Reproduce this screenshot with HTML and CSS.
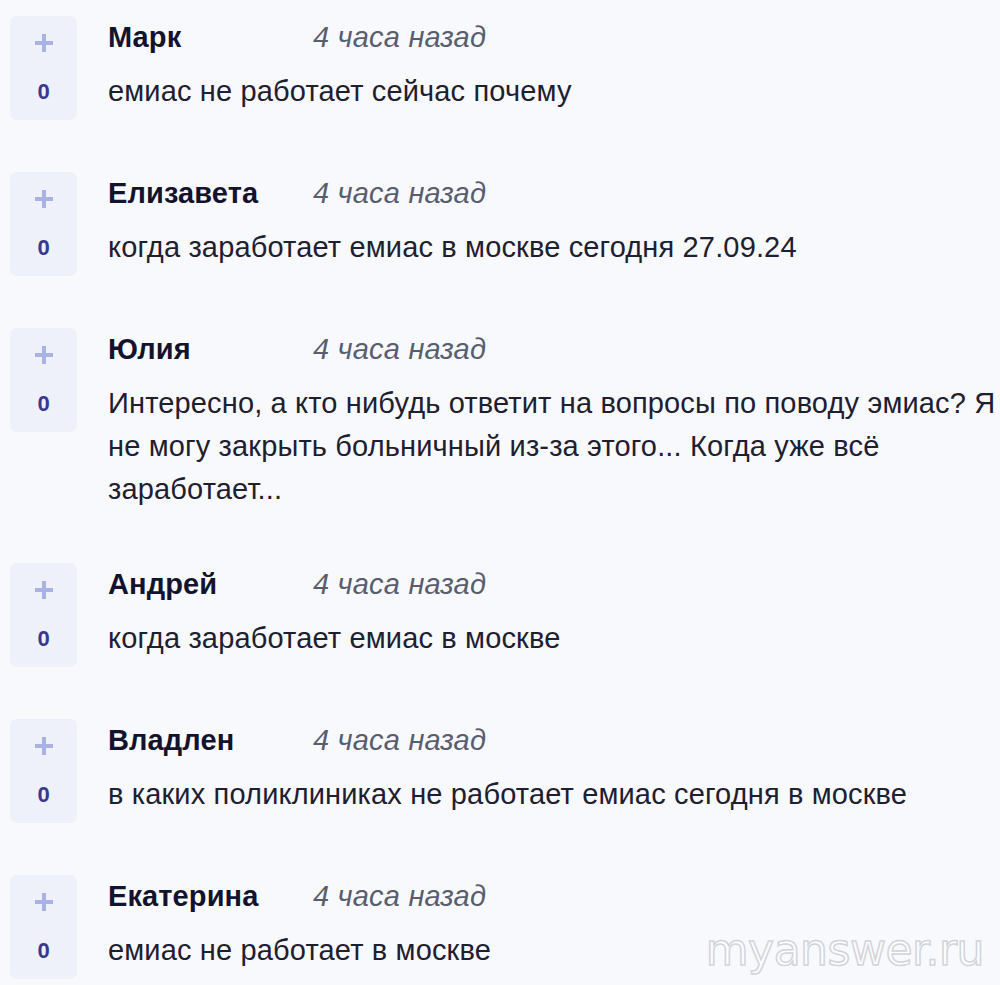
FILE: index.html
```html
<!DOCTYPE html>
<html lang="ru">
<head>
    <meta charset="UTF-8">
    <meta name="viewport" content="width=device-width, initial-scale=1.0">
    <title>Комментарии</title>
    <link rel="stylesheet" href="styles.css">
</head>
<body>

<div class="comments">
    <div class="comment">
        <div class="vote">
            <svg class="vote-plus" width="22" height="22" viewBox="0 0 22 22"><path d="M11 2v18M2 11h18" stroke="#a9b2e2" stroke-width="4"/></svg>
            <span class="vote-count">0</span>
        </div>
        <div class="comment-body">
            <div class="comment-head">
                <span class="author">Марк</span>
                <span class="time">4 часа назад</span>
            </div>
            <p class="text">емиас не работает сейчас почему</p>
        </div>
    </div>

    <div class="comment">
        <div class="vote">
            <svg class="vote-plus" width="22" height="22" viewBox="0 0 22 22"><path d="M11 2v18M2 11h18" stroke="#a9b2e2" stroke-width="4"/></svg>
            <span class="vote-count">0</span>
        </div>
        <div class="comment-body">
            <div class="comment-head">
                <span class="author">Елизавета</span>
                <span class="time">4 часа назад</span>
            </div>
            <p class="text">когда заработает емиас в москве сегодня 27.09.24</p>
        </div>
    </div>

    <div class="comment">
        <div class="vote">
            <svg class="vote-plus" width="22" height="22" viewBox="0 0 22 22"><path d="M11 2v18M2 11h18" stroke="#a9b2e2" stroke-width="4"/></svg>
            <span class="vote-count">0</span>
        </div>
        <div class="comment-body">
            <div class="comment-head">
                <span class="author">Юлия</span>
                <span class="time">4 часа назад</span>
            </div>
            <p class="text">Интересно, а кто нибудь ответит на вопросы по поводу эмиас? Я не могу закрыть больничный из-за этого... Когда уже всё заработает...</p>
        </div>
    </div>

    <div class="comment">
        <div class="vote">
            <svg class="vote-plus" width="22" height="22" viewBox="0 0 22 22"><path d="M11 2v18M2 11h18" stroke="#a9b2e2" stroke-width="4"/></svg>
            <span class="vote-count">0</span>
        </div>
        <div class="comment-body">
            <div class="comment-head">
                <span class="author">Андрей</span>
                <span class="time">4 часа назад</span>
            </div>
            <p class="text">когда заработает емиас в москве</p>
        </div>
    </div>

    <div class="comment">
        <div class="vote">
            <svg class="vote-plus" width="22" height="22" viewBox="0 0 22 22"><path d="M11 2v18M2 11h18" stroke="#a9b2e2" stroke-width="4"/></svg>
            <span class="vote-count">0</span>
        </div>
        <div class="comment-body">
            <div class="comment-head">
                <span class="author">Владлен</span>
                <span class="time">4 часа назад</span>
            </div>
            <p class="text">в каких поликлиниках не работает емиас сегодня в москве</p>
        </div>
    </div>

    <div class="comment">
        <div class="vote">
            <svg class="vote-plus" width="22" height="22" viewBox="0 0 22 22"><path d="M11 2v18M2 11h18" stroke="#a9b2e2" stroke-width="4"/></svg>
            <span class="vote-count">0</span>
        </div>
        <div class="comment-body">
            <div class="comment-head">
                <span class="author">Екатерина</span>
                <span class="time">4 часа назад</span>
            </div>
            <p class="text">емиас не работает в москве</p>
        </div>
    </div>
</div>

<!-- watermark over the content -->
<div class="watermark">myanswer.ru</div>

</body>
</html>
```

FILE: styles.css
```css
/* Basic Reset */
* {
    box-sizing: border-box;
    margin: 0;
    padding: 0;
}

body {
    background-color: #f8f9fc;
    font-family: "Liberation Sans", Arial, sans-serif;
    color: #1e2030;
    overflow: hidden;
}

/* Comment list */
.comments {
    padding: 16px 0 0 10px;
}

.comment {
    display: flex;
    gap: 31px;
    margin-bottom: 52px;
}

/* Vote box */
.vote {
    flex: 0 0 67px;
    height: 104px;
    background-color: #eef0fa;
    border-radius: 7px;
    display: flex;
    flex-direction: column;
    align-items: center;
    padding-top: 16px;
}

.vote-plus {
    display: block;
}

.vote-count {
    margin-top: 25px;
    font-size: 22px;
    font-weight: bold;
    color: #38398a;
}

/* Comment content */
.comment-body {
    flex: 1;
}

.comment-head {
    display: flex;
    height: 42px;
    align-items: center;
}

.author {
    min-width: 205px;
    font-size: 29px;
    font-weight: bold;
    letter-spacing: 0.1px;
    color: #13132d;
}

.time {
    font-size: 29px;
    font-style: italic;
    letter-spacing: 0.2px;
    color: #585d6f;
}

.text {
    margin-top: 12px;
    font-size: 29px;
    letter-spacing: 0.15px;
    line-height: 43px;
}

/* Watermark */
.watermark {
    position: absolute;
    top: 924px;
    right: 16px;
    font-family: "DejaVu Sans", sans-serif;
    font-size: 44px;
    letter-spacing: -0.5px;
    color: #fdfdfe;
    -webkit-text-stroke: 1.5px #d2d4da;
}
```
